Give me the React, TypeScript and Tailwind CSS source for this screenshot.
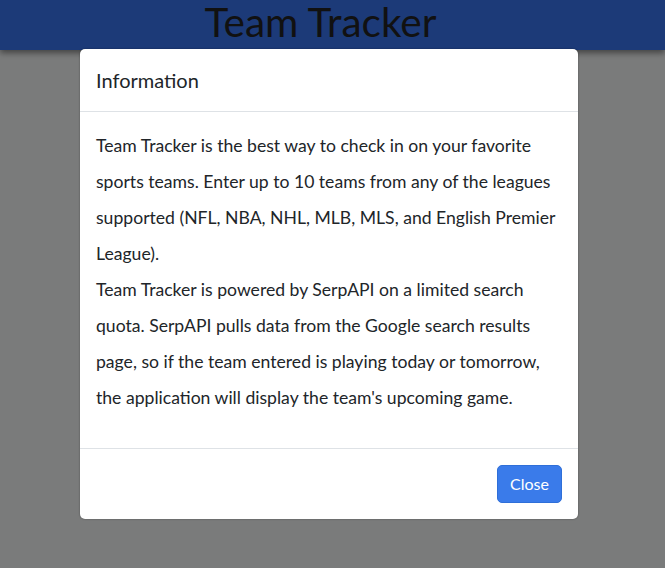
import React from 'react'

const App: React.FC = () => {
  return (
    <div
      className="relative h-[568px] w-full overflow-hidden bg-[#7a7b7b]"
      style={{ fontFamily: 'Lato, "Open Sans", sans-serif' }}
    >
      {/* Header */}
      <header className="flex h-[50px] items-start justify-center bg-[#1c3a78] pr-[24px] shadow-[0_3px_6px_rgba(0,0,0,0.45)]">
        <h1 className="text-[40.5px] leading-[44px] text-[#111]">Team Tracker</h1>
      </header>

      {/* Modal */}
      <div className="absolute left-[80px] top-[49px] w-[498px] rounded-[5px] bg-white text-[#212529] shadow-[0_0_2px_rgba(0,0,0,0.4)]">
        <div className="border-b border-[#dee2e6] p-4">
          <h5 className="text-[20px] leading-[30px]">Information</h5>
        </div>
        <div className="p-4">
          <p className="mb-4 text-[17.6px] leading-[36px]">
            Team Tracker is the best way to check in on your favorite sports teams. Enter up to 10 teams
            from any of the leagues supported (NFL, NBA, NHL, MLB, MLS, and English Premier League).
            <br />
            Team Tracker is powered by SerpAPI on a limited search quota. SerpAPI pulls data from the
            Google search results page, so if the team entered is playing today or tomorrow, the
            application will display the team's upcoming game.
          </p>
        </div>
        <div className="flex justify-end border-t border-[#dee2e6] px-4 py-4">
          <button className="h-[38px] rounded-[5px] border border-[#2f6fd8] bg-[#3a7bea] px-3 text-[16px] text-white">
            Close
          </button>
        </div>
      </div>
    </div>
  )
}

export default App
